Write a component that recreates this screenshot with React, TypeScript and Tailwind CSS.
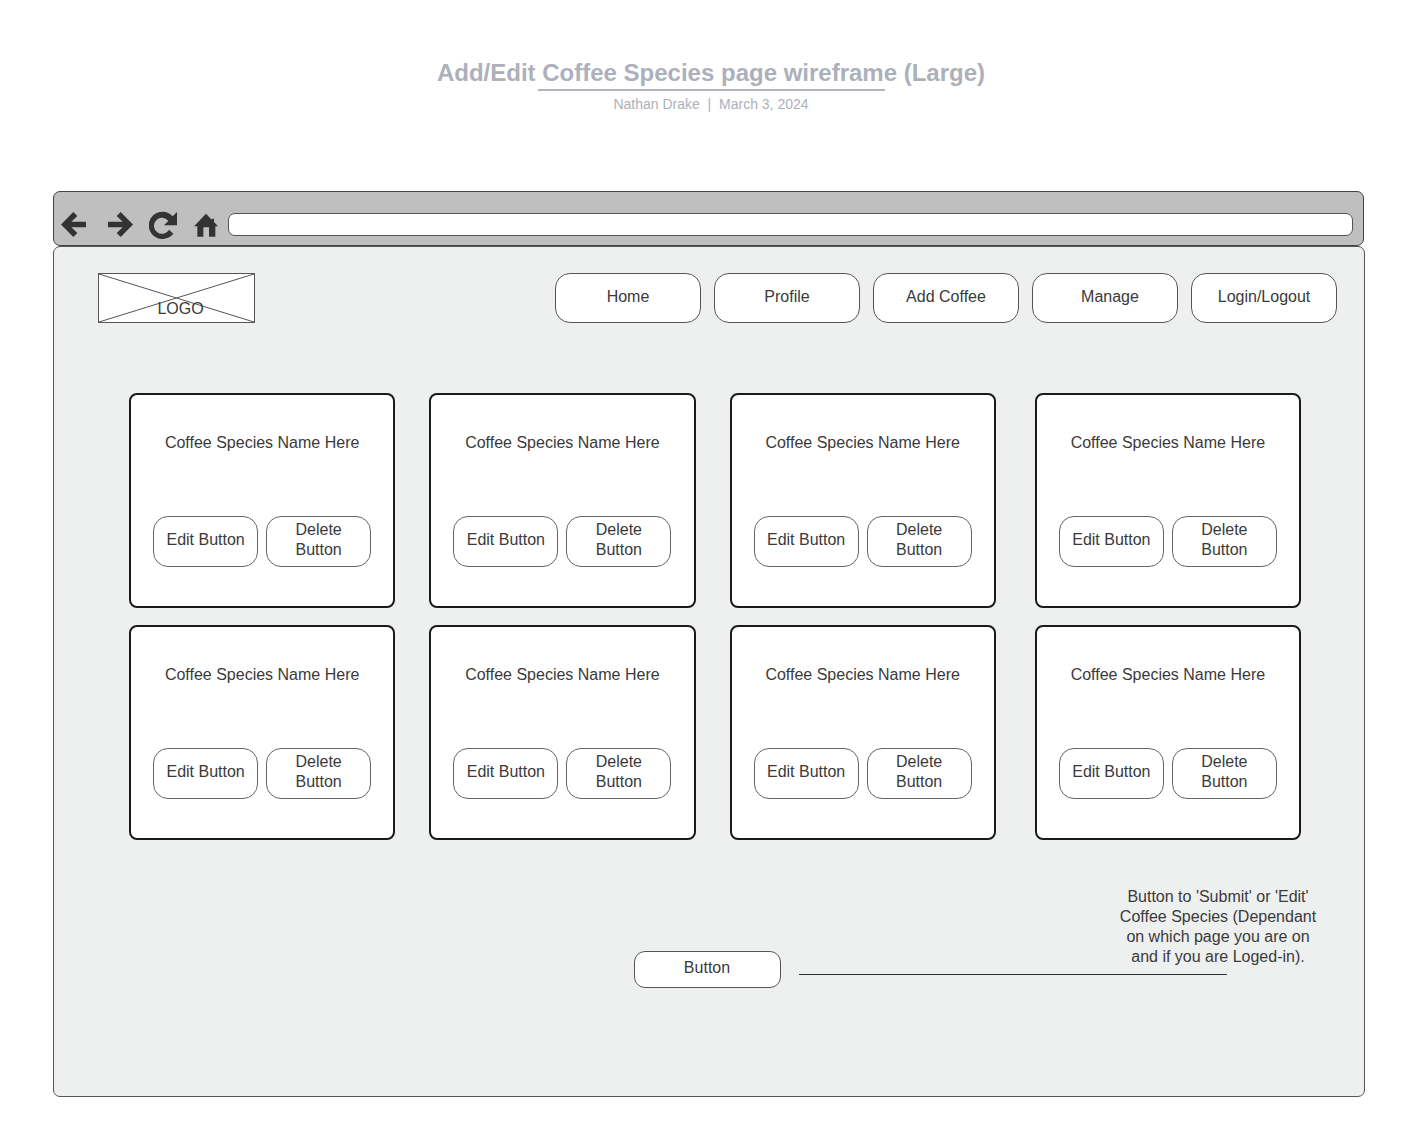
import React from "react";

const navItems = [
  { label: "Home", align: "" },
  { label: "Profile", align: "" },
  { label: "Add Coffee", align: "" },
  { label: "Manage", align: "pl-[10px]" },
  { label: "Login/Logout", align: "" },
];

const columns = ["mr-[34px]", "mr-[34px]", "mr-[39px]", ""];

function ArrowIcon({ className = "" }: { className?: string }) {
  return (
    <svg viewBox="0 0 75 75" className={`h-[25px] w-[25px] fill-[#333] ${className}`} aria-hidden="true">
      <path d="M0 37.5 37 0 49 12 31 29.500H76V45.500H31L49 63 37 75Z" />
    </svg>
  );
}

function ReloadIcon() {
  return (
    <svg viewBox="0 0 84 84" className="h-7 w-7 fill-[#333]" aria-hidden="true">
      <path d="M84 3V43H45L58 30A24 24 0 1 0 60 56L73 68A41 41 0 1 1 71 16Z" />
    </svg>
  );
}

function HomeIcon() {
  return (
    <svg viewBox="0 0 72 72" className="h-6 w-6 fill-[#333]" aria-hidden="true">
      <path d="M36 2 53 20V17H60V27L72 40H64V71H45V43H28V71H10V40H0Z" />
    </svg>
  );
}

function BrowserBar() {
  return (
    <div className="mr-px flex h-[55px] items-center rounded-[7px] border border-[#444] bg-[#bfbfbf] pt-[12px] pr-[10px] pl-[7px]">
      <button type="button" aria-label="Back">
        <ArrowIcon />
      </button>
      <button type="button" aria-label="Forward" className="ml-[22px]">
        <ArrowIcon className="rotate-180" />
      </button>
      <button type="button" aria-label="Reload" className="ml-4">
        <ReloadIcon />
      </button>
      <button type="button" aria-label="Home page" className="ml-[17px]">
        <HomeIcon />
      </button>
      <input
        type="text"
        aria-label="Address"
        className="ml-[10px] h-[23px] min-w-0 flex-1 rounded-[7px] border border-[#555] bg-white px-2 text-sm outline-none"
      />
    </div>
  );
}

function Logo() {
  return (
    <a href="#" className="relative flex h-[50px] w-[157px] items-end justify-center border border-[#555] bg-white pb-[3px] leading-5">
      <svg viewBox="0 0 155 48" preserveAspectRatio="none" className="absolute inset-0 h-full w-full" aria-hidden="true">
        <path d="M0 0 155 48M0 48 155 0" stroke="#555" strokeWidth="1" fill="none" />
      </svg>
      <span className="relative pl-2">LOGO</span>
    </a>
  );
}

function SpeciesCard({ spacing }: { spacing: string }) {
  return (
    <article className={`min-w-0 flex-1 rounded-lg border-2 border-[#1a1a1a] bg-white pt-[38px] pb-[39px] text-center ${spacing}`}>
      <h2 className="leading-5">Coffee Species Name Here</h2>
      <div className="mt-[63px] flex justify-center gap-2">
        <button type="button" className="h-[51px] w-[105px] rounded-[15px] border border-[#666] pb-1 leading-5">
          Edit Button
        </button>
        <button type="button" className="h-[51px] w-[105px] rounded-[15px] border border-[#666] px-5 pb-1 leading-5">
          Delete Button
        </button>
      </div>
    </article>
  );
}

export default function App() {
  return (
    <div className="min-h-screen bg-white pb-[51px] font-['Liberation_Sans',Arial,sans-serif] text-base text-[#3a3a3a]">
      <header className="flex flex-col items-center pt-[57px] pr-[2px] text-[#adb0bb]">
        <h1 className="text-2xl leading-8 font-bold">Add/Edit Coffee Species page wireframe (Large)</h1>
        <div className="h-[2px] w-[347px] bg-[#b1b5bf]" />
        <p className="mt-1 text-sm leading-[18px] whitespace-pre">Nathan Drake  |  March 3, 2024</p>
      </header>

      <div className="mt-[78px] mr-[59px] ml-[53px]">
        <BrowserBar />
        <main className="rounded-[7px] border border-[#555] bg-[#eef0f0] pb-[108px]">
          <div className="flex items-center justify-between pt-[26px] pr-[27px] pl-[44px]">
            <Logo />
            <nav className="flex gap-[13px]">
              {navItems.map((item) => (
                <button
                  key={item.label}
                  type="button"
                  className={`h-[50px] w-[146px] rounded-[15px] border border-[#555] bg-white pb-[2px] leading-5 ${item.align}`}
                >
                  {item.label}
                </button>
              ))}
            </nav>
          </div>

          <section className="mt-[70px] flex flex-col gap-[17px] pr-[63px] pl-[75px]">
            {["first", "second"].map((row) => (
              <div key={row} className="flex">
                {columns.map((spacing, i) => (
                  <SpeciesCard key={i} spacing={spacing} />
                ))}
              </div>
            ))}
          </section>

          <section className="mt-[47px]">
            <p className="mr-[45px] ml-auto w-[202px] text-center leading-5">
              Button to 'Submit' or 'Edit' Coffee Species (Dependant on which page you are on and if you are Loged-in).
            </p>
            <div className="-mt-4 grid grid-cols-[1fr_auto_1fr] pr-1">
              <button
                type="button"
                className="col-start-2 h-[37px] w-[147px] rounded-[11px] border border-[#555] bg-white pb-1 leading-5"
              >
                Button
              </button>
              <div className="mt-[23px] mr-[133px] ml-[18px] h-px bg-[#333]" />
            </div>
          </section>
        </main>
      </div>
    </div>
  );
}
